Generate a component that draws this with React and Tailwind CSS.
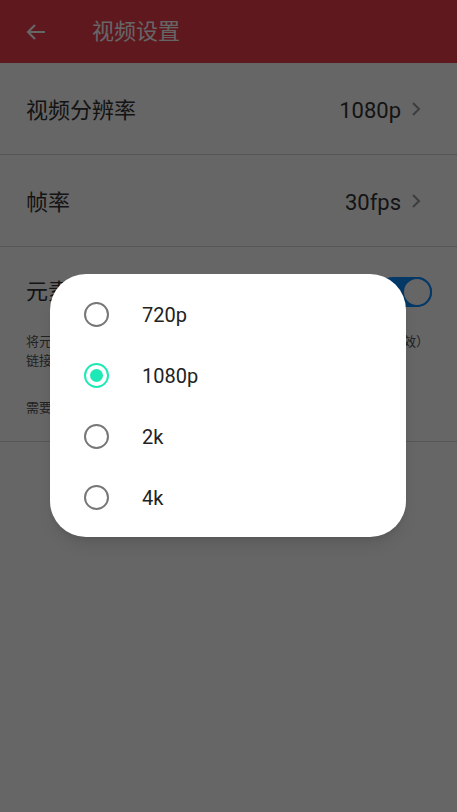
import React, { useState } from 'react';

const FONT = { fontFamily: 'Roboto, "Noto Sans CJK SC", sans-serif' };

const options = ['720p', '1080p', '2k', '4k'];

const SettingRow = ({ label, value }) => (
  <div className="h-[92px] flex items-center justify-between pl-[26px] pr-[36px] border-b border-[#d8d8d8]">
    <span className="text-[22px] text-[#333] pt-[3px]">{label}</span>
    <div className="flex items-center gap-[10px]">
      <span className="text-[22px] text-[#333] pt-[3px]">{value}</span>
      <svg width="10" height="16" viewBox="0 0 10 16" fill="none">
        <path d="M2 2l6 6-6 6" stroke="#999" strokeWidth="2" />
      </svg>
    </div>
  </div>
);

const Radio = ({ checked }) => (
  <span
    className={`w-[25px] h-[25px] rounded-full border-2 flex items-center justify-center ${
      checked ? 'border-[#1de9b6]' : 'border-[#777]'
    }`}
  >
    {checked && <span className="w-[13px] h-[13px] rounded-full bg-[#1de9b6]" />}
  </span>
);

export default function App() {
  const [selected, setSelected] = useState('1080p');

  return (
    <div className="relative w-full h-[812px] bg-white overflow-hidden" style={FONT}>
      {/* Header */}
      <div className="h-[63px] bg-[#eb3c4d] flex items-center">
        <svg className="ml-[24px]" width="24" height="24" viewBox="0 0 24 24" fill="none">
          <path d="M21 12H4M11 5l-7 7 7 7" stroke="#fff" strokeWidth="2.2" />
        </svg>
        <h1 className="ml-[44px] text-[22px] text-white">视频设置</h1>
      </div>

      <SettingRow label="视频分辨率" value="1080p" />
      <SettingRow label="帧率" value="30fps" />

      <div className="pl-[26px] pr-[25px] pt-[28px] pb-[24px] border-b border-[#d8d8d8]">
        <div className="flex items-center justify-between">
          <span className="text-[22px] text-[#333]">元素分享到视频</span>
          <div className="w-[54px] h-[30px] rounded-full bg-[#0a8cff] flex items-center justify-end">
            <span className="w-[30px] h-[30px] rounded-full bg-white border-2 border-[#0a8cff]" />
          </div>
        </div>
        <p className="mt-[24px] text-[13px] leading-[19px] text-[#555]">
          将元素添加的链接分享到视频描述中，方便观众查看（重启应用生效）
          <br />
          链接将在视频发布后显示在简介区域
        </p>
        <p className="mt-[28px] text-[13px] leading-[19px] text-[#555]">需要登录后才能使用此功能</p>
      </div>

      {/* Dialog overlay */}
      <div className="absolute inset-0 bg-black/60">
        <div className="absolute left-[50px] top-[274px] w-[356px] h-[263px] rounded-[36px] bg-white pt-[10px] shadow-lg">
          {options.map((opt) => (
            <button
              key={opt}
              onClick={() => setSelected(opt)}
              className="w-full h-[61px] flex items-center pl-[34px] gap-[33px] text-left"
            >
              <Radio checked={selected === opt} />
              <span className="text-[20px] text-[#222]">{opt}</span>
            </button>
          ))}
        </div>
      </div>
    </div>
  );
}
